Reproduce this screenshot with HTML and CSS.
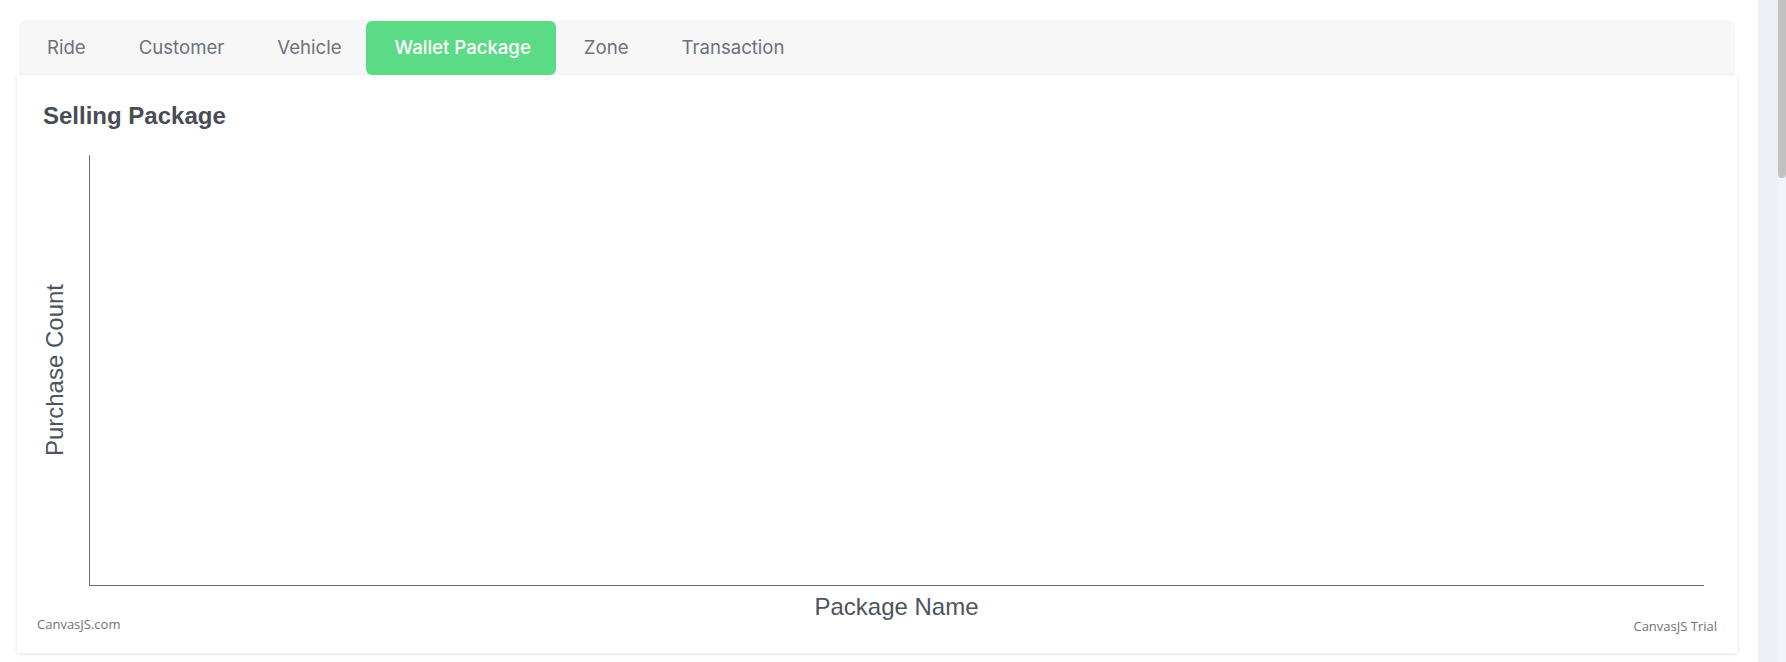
FILE: index.html
```html
<!DOCTYPE html>
<html lang="en">
<head>
<meta charset="utf-8">
<title>Wallet Package</title>
<link rel="stylesheet" href="styles.css">
</head>
<body>
<div class="page">
  <main class="content">
    <nav class="tabs">
      <a class="tab">Ride</a>
      <a class="tab">Customer</a>
      <a class="tab">Vehicle</a>
      <a class="tab active">Wallet Package</a>
      <a class="tab">Zone</a>
      <a class="tab">Transaction</a>
    </nav>
    <section class="card">
      <h2 class="chart-title">Selling Package</h2>
      <div class="chart">
        <div class="y-title"><span>Purchase Count</span></div>
        <div class="plot"></div>
        <div class="x-title">Package Name</div>
      </div>
      <div class="credits">
        <span class="credit-left">CanvasJS.com</span>
        <span class="credit-right">CanvasJS Trial</span>
      </div>
    </section>
  </main>
  <aside class="side-strip"></aside>
  <div class="scrollbar"><div class="thumb"></div></div>
</div>
</body>
</html>
```
FILE: styles.css
```css
html, body {
  margin: 0;
  padding: 0;
  height: 100%;
  overflow: hidden;
  background: #ffffff;
}

.page {
  display: flex;
  height: 662px;
}

.content {
  flex: 1;
  padding: 20px 23px 0 19px;
  min-width: 0;
}

.tabs {
  display: flex;
  height: 55px;
  background: #f7f7f7;
  border-radius: 8px 8px 0 0;
}

.tab {
  display: flex;
  align-items: center;
  padding: 0 25px 2px 28px;
  font-family: Inter, "Liberation Sans", sans-serif;
  font-size: 18.6px;
  color: #6b717c;
  letter-spacing: 0;
  cursor: pointer;
}

.tab.active {
  background: #5cdb86;
  color: #ffffff;
  border-radius: 6px;
  margin-top: 1px;
  font-weight: 500;
}

.card {
  margin: 0 -2px;
  background: #ffffff;
  box-shadow: 0 1px 4px rgba(0, 0, 0, 0.12);
  padding: 27px 20px 20px 0;
}

.chart-title {
  margin: 0 0 25px 26px;
  font-family: "Liberation Sans", Arial, sans-serif;
  font-weight: 700;
  font-size: 24px;
  line-height: 28px;
  color: #474d55;
}

.chart {
  display: grid;
  grid-template-columns: 72px 1fr;
  grid-template-rows: 431px auto;
  margin-right: 13px;
}

.y-title {
  display: flex;
  align-items: center;
  padding-left: 26px;
}

.y-title span {
  writing-mode: vertical-rl;
  transform: rotate(180deg);
  font-family: "Liberation Sans", Arial, sans-serif;
  font-size: 24px;
  line-height: 24px;
  color: #4d545c;
}

.plot {
  border-left: 1px solid #6e6e6e;
  border-bottom: 1px solid #6e6e6e;
}

.x-title {
  grid-column: 2;
  text-align: center;
  padding-top: 10px;
  font-family: "Liberation Sans", Arial, sans-serif;
  font-size: 24px;
  line-height: 22px;
  color: #4d545c;
}

.credits {
  display: flex;
  justify-content: space-between;
  align-items: flex-start;
  padding-left: 20px;
  font-family: "Open Sans", "Noto Sans", sans-serif;
  font-size: 13px;
  line-height: 13px;
  color: #727272;
}

.credit-right {
  padding-top: 2px;
}

.side-strip {
  width: 20px;
  background: #eff0f6;
}

.scrollbar {
  width: 8px;
  background: #f3f4f9;
}

.thumb {
  height: 178px;
  background: #c1c1c1;
  border-radius: 0 0 4px 4px;
}
```
